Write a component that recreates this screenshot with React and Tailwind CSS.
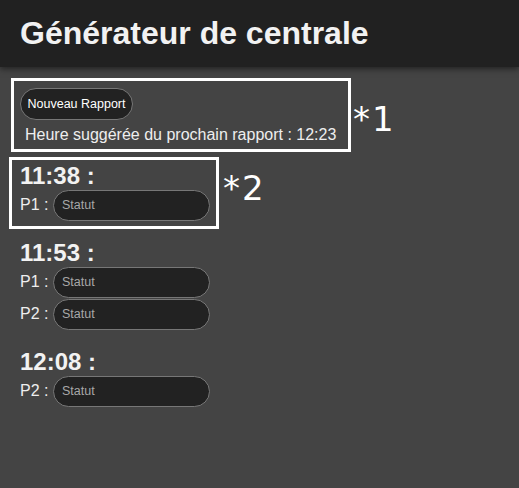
const reports = [
  { time: "11:38", players: ["P1"] },
  { time: "11:53", players: ["P1", "P2"] },
  { time: "12:08", players: ["P2"] },
];

function StatusRow({ player }) {
  return (
    <div className="flex items-center h-[31px]">
      <span className="text-[16px] text-[#eeeeee] leading-none">{player} :</span>
      <input
        type="text"
        placeholder="Statut"
        className="ml-[4.5px] w-[157px] h-[31px] rounded-full bg-[#222222] border border-[#777777] pl-[8px] text-[12.5px] text-[#eeeeee] placeholder:text-[#a8a8a8] outline-none"
      />
    </div>
  );
}

export default function App() {
  return (
    <div
      className="relative min-h-screen bg-[#444444] text-[#eeeeee]"
      style={{ fontFamily: '"Liberation Sans", Arial, sans-serif' }}
    >
      {/* Header */}
      <header className="h-[67px] bg-[#212121] px-[20px] flex items-center shadow-[0_2px_6px_rgba(0,0,0,0.5)]">
        <h1 className="text-[32px] font-bold leading-none text-[#f2f2f2] -mt-[1px]">Générateur de centrale</h1>
      </header>

      {/* Content */}
      <main className="pl-[20px] pt-[21px] flex flex-col">
        <div>
          <button className="h-[32px] w-[113px] rounded-full bg-[#222222] border border-[#777777] text-[12.5px] text-white">
            Nouveau Rapport
          </button>
        </div>
        <p className="mt-[5.5px] ml-[5px] text-[16px] leading-[18px]">
          Heure suggérée du prochain rapport : 12:23
        </p>

        {reports.map((r) => (
          <section key={r.time} className="mt-[18px] flex flex-col">
            <h2 className="text-[24px] font-bold leading-[28px] text-[#f2f2f2]">{r.time} :</h2>
            <div className="flex flex-col gap-[1px]">
              {r.players.map((p) => (
                <StatusRow key={p} player={p} />
              ))}
            </div>
          </section>
        ))}
      </main>

      {/* Annotations */}
      <div className="absolute left-[11px] top-[78px] w-[340px] h-[74px] border-[3px] border-white pointer-events-none" />
      <div className="absolute left-[9px] top-[157px] w-[210px] h-[72px] border-[3px] border-white pointer-events-none" />
      <span
        className="absolute left-[353px] top-[102px] text-[34px] leading-none tracking-[2px] text-white"
        style={{ fontFamily: '"DejaVu Sans", sans-serif' }}
      >
        *1
      </span>
      <span
        className="absolute left-[223px] top-[171px] text-[34px] leading-none tracking-[2px] text-white"
        style={{ fontFamily: '"DejaVu Sans", sans-serif' }}
      >
        *2
      </span>
    </div>
  );
}
